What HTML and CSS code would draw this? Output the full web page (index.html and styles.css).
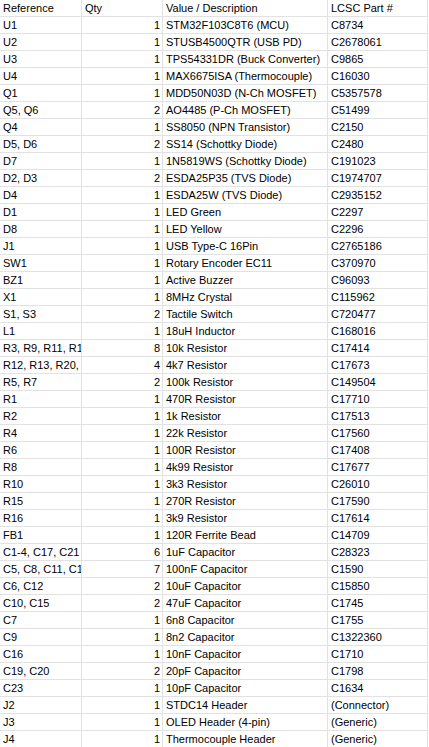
FILE: index.html
```html
<!DOCTYPE html>
<html>
<head>
<meta charset="utf-8">
<link rel="stylesheet" href="styles.css">
</head>
<body>
<table class="sheet">
<colgroup><col class="c-ref"><col class="c-qty"><col class="c-val"><col class="c-lcsc"></colgroup>
<tbody>
<tr><td>Reference</td><td>Qty</td><td>Value / Description</td><td>LCSC Part #</td></tr>
<tr><td>U1</td><td class="n">1</td><td>STM32F103C8T6 (MCU)</td><td>C8734</td></tr>
<tr><td>U2</td><td class="n">1</td><td>STUSB4500QTR (USB PD)</td><td>C2678061</td></tr>
<tr><td>U3</td><td class="n">1</td><td>TPS54331DR (Buck Converter)</td><td>C9865</td></tr>
<tr><td>U4</td><td class="n">1</td><td>MAX6675ISA (Thermocouple)</td><td>C16030</td></tr>
<tr><td>Q1</td><td class="n">1</td><td>MDD50N03D (N-Ch MOSFET)</td><td>C5357578</td></tr>
<tr><td>Q5, Q6</td><td class="n">2</td><td>AO4485 (P-Ch MOSFET)</td><td>C51499</td></tr>
<tr><td>Q4</td><td class="n">1</td><td>SS8050 (NPN Transistor)</td><td>C2150</td></tr>
<tr><td>D5, D6</td><td class="n">2</td><td>SS14 (Schottky Diode)</td><td>C2480</td></tr>
<tr><td>D7</td><td class="n">1</td><td>1N5819WS (Schottky Diode)</td><td>C191023</td></tr>
<tr><td>D2, D3</td><td class="n">2</td><td>ESDA25P35 (TVS Diode)</td><td>C1974707</td></tr>
<tr><td>D4</td><td class="n">1</td><td>ESDA25W (TVS Diode)</td><td>C2935152</td></tr>
<tr><td>D1</td><td class="n">1</td><td>LED Green</td><td>C2297</td></tr>
<tr><td>D8</td><td class="n">1</td><td>LED Yellow</td><td>C2296</td></tr>
<tr><td>J1</td><td class="n">1</td><td>USB Type-C 16Pin</td><td>C2765186</td></tr>
<tr><td>SW1</td><td class="n">1</td><td>Rotary Encoder EC11</td><td>C370970</td></tr>
<tr><td>BZ1</td><td class="n">1</td><td>Active Buzzer</td><td>C96093</td></tr>
<tr><td>X1</td><td class="n">1</td><td>8MHz Crystal</td><td>C115962</td></tr>
<tr><td>S1, S3</td><td class="n">2</td><td>Tactile Switch</td><td>C720477</td></tr>
<tr><td>L1</td><td class="n">1</td><td>18uH Inductor</td><td>C168016</td></tr>
<tr><td class="cl"><div class="clip">R3, R9, R11, R14, R17, R18, R19, R22</div></td><td class="n">8</td><td>10k Resistor</td><td>C17414</td></tr>
<tr><td class="cl"><div class="clip">R12, R13, R20, <span class="mark">R21</span></div></td><td class="n">4</td><td>4k7 Resistor</td><td>C17673</td></tr>
<tr><td>R5, R7</td><td class="n">2</td><td>100k Resistor</td><td>C149504</td></tr>
<tr><td>R1</td><td class="n">1</td><td>470R Resistor</td><td>C17710</td></tr>
<tr><td>R2</td><td class="n">1</td><td>1k Resistor</td><td>C17513</td></tr>
<tr><td>R4</td><td class="n">1</td><td>22k Resistor</td><td>C17560</td></tr>
<tr><td>R6</td><td class="n">1</td><td>100R Resistor</td><td>C17408</td></tr>
<tr><td>R8</td><td class="n">1</td><td>4k99 Resistor</td><td>C17677</td></tr>
<tr><td>R10</td><td class="n">1</td><td>3k3 Resistor</td><td>C26010</td></tr>
<tr><td>R15</td><td class="n">1</td><td>270R Resistor</td><td>C17590</td></tr>
<tr><td>R16</td><td class="n">1</td><td>3k9 Resistor</td><td>C17614</td></tr>
<tr><td>FB1</td><td class="n">1</td><td>120R Ferrite Bead</td><td>C14709</td></tr>
<tr><td class="cl"><div class="clip">C1-4, C17, C21</div></td><td class="n">6</td><td>1uF Capacitor</td><td>C28323</td></tr>
<tr><td class="cl"><div class="clip">C5, C8, C11, C13, C14, C18, C22</div></td><td class="n">7</td><td>100nF Capacitor</td><td>C1590</td></tr>
<tr><td>C6, C12</td><td class="n">2</td><td>10uF Capacitor</td><td>C15850</td></tr>
<tr><td>C10, C15</td><td class="n">2</td><td>47uF Capacitor</td><td>C1745</td></tr>
<tr><td>C7</td><td class="n">1</td><td>6n8 Capacitor</td><td>C1755</td></tr>
<tr><td>C9</td><td class="n">1</td><td>8n2 Capacitor</td><td>C1322360</td></tr>
<tr><td>C16</td><td class="n">1</td><td>10nF Capacitor</td><td>C1710</td></tr>
<tr><td>C19, C20</td><td class="n">2</td><td>20pF Capacitor</td><td>C1798</td></tr>
<tr><td>C23</td><td class="n">1</td><td>10pF Capacitor</td><td>C1634</td></tr>
<tr><td>J2</td><td class="n">1</td><td>STDC14 Header</td><td>(Connector)</td></tr>
<tr><td>J3</td><td class="n">1</td><td>OLED Header (4-pin)</td><td>(Generic)</td></tr>
<tr><td>J4</td><td class="n">1</td><td>Thermocouple Header</td><td>(Generic)</td></tr>
</tbody>
</table>
</body>
</html>
```
FILE: styles.css
```css
html, body {
  margin: 0;
  padding: 0;
  background: #ffffff;
}
.sheet {
  border-collapse: separate;
  border-spacing: 0;
  table-layout: fixed;
  width: 428px;
  font-family: "Liberation Sans", Arial, sans-serif;
  font-size: 11px;
  color: #000000;
}
.c-ref { width: 82px; }
.c-qty { width: 81px; }
.c-val { width: 165px; }
.c-lcsc { width: 100px; }
.sheet td {
  box-sizing: border-box;
  height: 17px;
  padding: 0 2px 0 3px;
  border-right: 1px solid #e2e2e2;
  border-bottom: 1px solid #e2e2e2;
  white-space: nowrap;
  overflow: hidden;
  line-height: 16px;
  vertical-align: top;
}
.sheet td.n {
  text-align: right;
  padding-right: 2px;
}
.sheet td.cl {
  padding-right: 0;
}
.clip {
  overflow: hidden;
  white-space: nowrap;
  width: 100%;
}
.mark {
  color: #f4a460;
}
```
